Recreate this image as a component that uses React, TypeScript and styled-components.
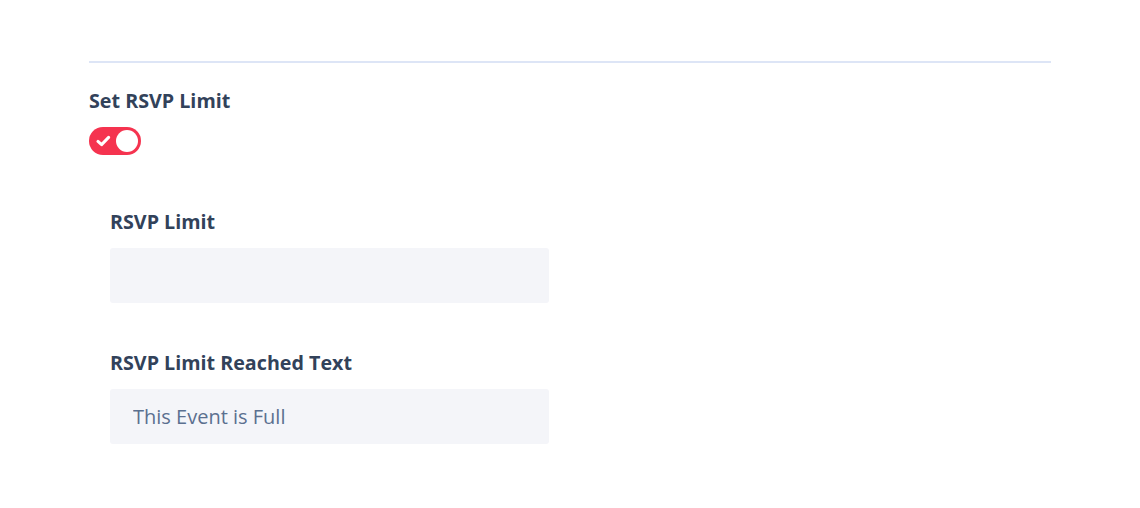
import React from 'react'
import styled, { createGlobalStyle } from 'styled-components'

const GlobalStyle = createGlobalStyle`
  body {
    margin: 0;
    background: #ffffff;
    font-family: "Open Sans", "Noto Sans", sans-serif;
  }
`

const Page = styled.div`
  padding: 61px 89px 0 89px;
  width: 962px;
`

const Divider = styled.hr`
  margin: 0;
  border: none;
  height: 2px;
  background: #dde5f6;
`

const Section = styled.section`
  display: flex;
  flex-direction: column;
  align-items: flex-start;
  margin-top: 25px;
`

const Title = styled.h3`
  margin: 0;
  font-size: 19.7px;
  line-height: 26px;
  font-weight: 700;
  color: #32425a;
`

const Switch = styled.button<{ on?: boolean }>`
  position: relative;
  margin-top: 13px;
  width: 52px;
  height: 28px;
  border: none;
  border-radius: 14px;
  padding: 0;
  background: ${p => (p.on ? '#f5334f' : '#c8d0dc')};
  cursor: pointer;

  svg {
    position: absolute;
    left: 7px;
    top: 8px;
  }
`

const Knob = styled.span<{ on?: boolean }>`
  position: absolute;
  top: 3px;
  left: ${p => (p.on ? '27px' : '3px')};
  width: 22px;
  height: 22px;
  border-radius: 50%;
  background: #ffffff;
`

const Fields = styled.div`
  display: flex;
  flex-direction: column;
  gap: 47px;
  padding-left: 21px;
  margin-top: 54px;
  width: 439px;
`

const Field = styled.label`
  display: flex;
  flex-direction: column;
  gap: 13px;
`

const FieldLabel = styled.span`
  font-size: 19.7px;
  line-height: 26px;
  font-weight: 700;
  color: #32425a;
`

const Input = styled.input`
  box-sizing: border-box;
  width: 439px;
  height: 55px;
  border: none;
  border-radius: 3px;
  background: #f4f5f9;
  padding: 0 23px;
  font-family: "Open Sans", "Noto Sans", sans-serif;
  font-size: 20px;
  color: #5b7090;
  outline: none;
`

function Check () {
  return (
    <svg width='15' height='12' viewBox='0 0 15 12'>
      <path d='M2 6.4 L5.6 9.6 L12.6 2.4' fill='none' stroke='#ffffff' strokeWidth='3' strokeLinecap='round' strokeLinejoin='round' />
    </svg>
  )
}

export default function App () {
  const [on, setOn] = React.useState(true)
  const [limit, setLimit] = React.useState('')
  const [full, setFull] = React.useState('This Event is Full')

  return (
    <Page>
      <GlobalStyle />
      <Divider />
      <Section>
        <Title>Set RSVP Limit</Title>
        <Switch type='button' on={on} onClick={() => setOn(!on)}>
          {on && <Check />}
          <Knob on={on} />
        </Switch>
      </Section>
      {on && (
        <Fields>
          <Field>
            <FieldLabel>RSVP Limit</FieldLabel>
            <Input value={limit} onChange={e => setLimit(e.target.value)} />
          </Field>
          <Field>
            <FieldLabel>RSVP Limit Reached Text</FieldLabel>
            <Input value={full} onChange={e => setFull(e.target.value)} />
          </Field>
        </Fields>
      )}
    </Page>
  )
}
